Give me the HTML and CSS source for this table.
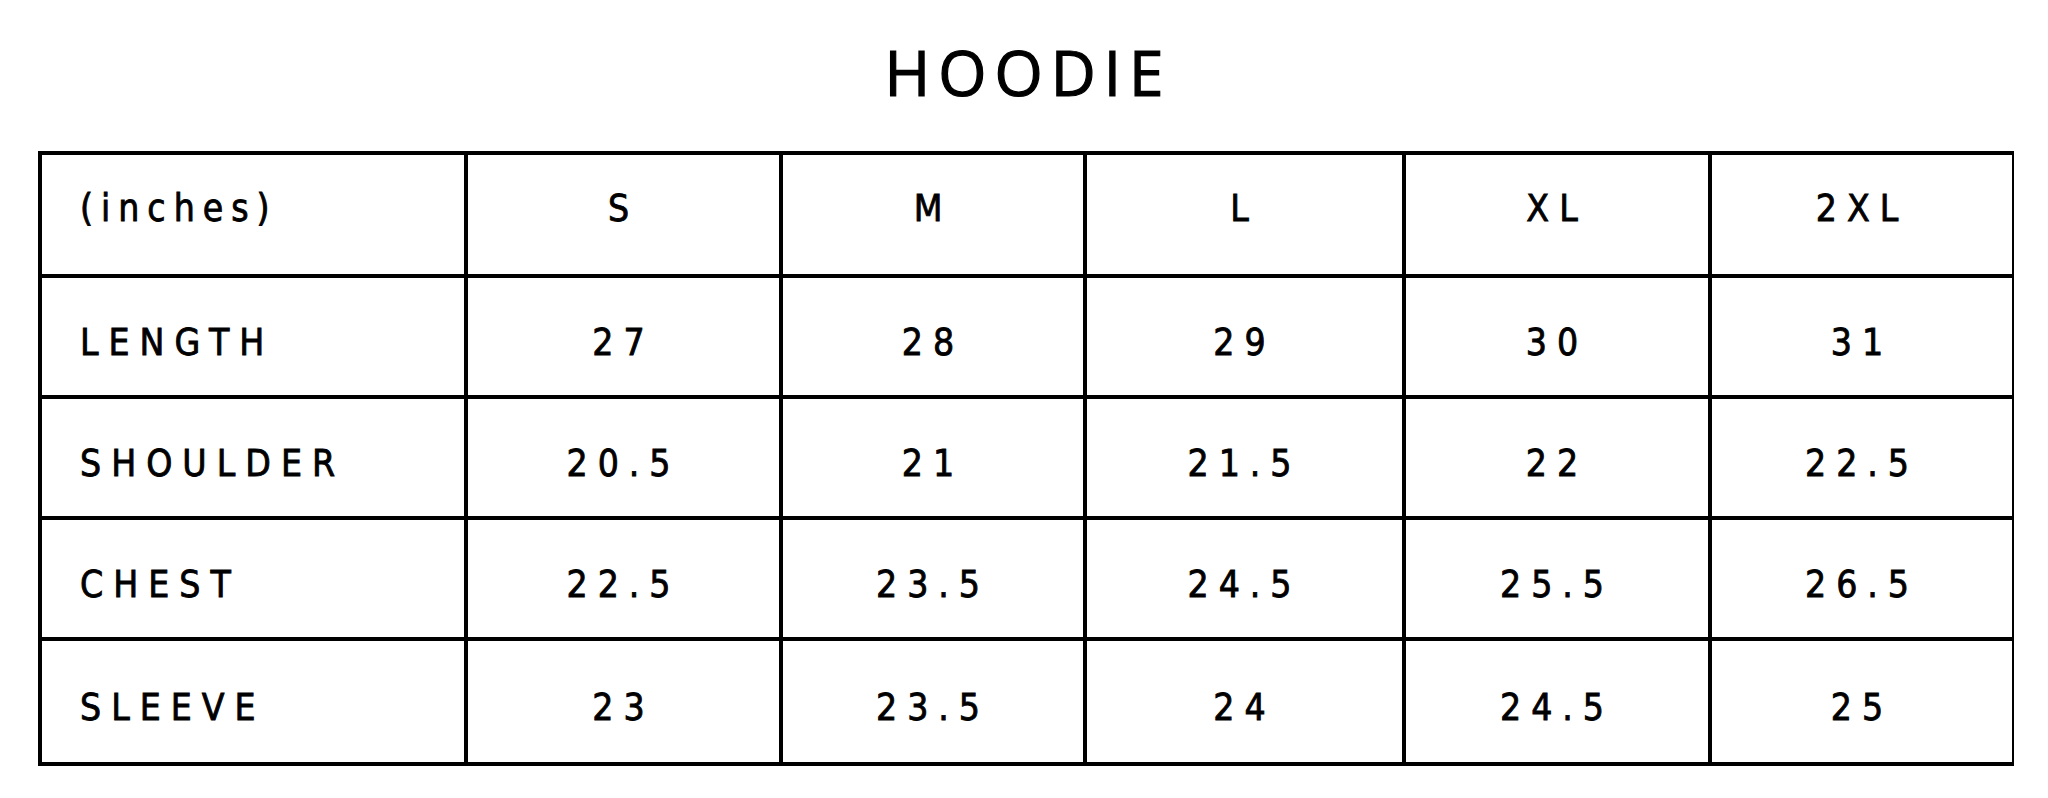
FILE: index.html
```html
<!DOCTYPE html>
<html lang="en">
<head>
<meta charset="utf-8">
<title>Hoodie size chart</title>
<link rel="stylesheet" href="styles.css">
</head>
<body>
<h1 class="title">HOODIE</h1>
<div class="chart">
  <div class="cell head label lower">(inches)</div>
  <div class="cell head">S</div>
  <div class="cell head">M</div>
  <div class="cell head">L</div>
  <div class="cell head">XL</div>
  <div class="cell head">2XL</div>

  <div class="cell label">LENGTH</div>
  <div class="cell">27</div>
  <div class="cell">28</div>
  <div class="cell">29</div>
  <div class="cell">30</div>
  <div class="cell">31</div>

  <div class="cell label">SHOULDER</div>
  <div class="cell">20.5</div>
  <div class="cell">21</div>
  <div class="cell">21.5</div>
  <div class="cell">22</div>
  <div class="cell">22.5</div>

  <div class="cell label">CHEST</div>
  <div class="cell">22.5</div>
  <div class="cell">23.5</div>
  <div class="cell">24.5</div>
  <div class="cell">25.5</div>
  <div class="cell">26.5</div>

  <div class="cell label">SLEEVE</div>
  <div class="cell">23</div>
  <div class="cell">23.5</div>
  <div class="cell">24</div>
  <div class="cell">24.5</div>
  <div class="cell">25</div>
</div>
</body>
</html>
```

FILE: styles.css
```css
html, body {
  margin: 0;
  padding: 0;
  background: #ffffff;
}

body {
  color: #000000;
  font-family: "Liberation Sans Narrow", "DejaVu Sans Condensed", Roboto, sans-serif;
}

.title {
  margin: 41px 0 0 0;
  height: 62px;
  font-family: "Open Sans", "Liberation Sans", sans-serif;
  font-weight: 500;
  font-size: 62px;
  line-height: 62px;
  letter-spacing: 8px;
  text-align: center;
  padding-left: 8px;
  -webkit-text-stroke: 1.2px #000000;
}

.chart {
  margin: 48px 0 0 38px;
  width: 1976px;
  box-sizing: border-box;
  display: grid;
  grid-template-columns: 422px 311px 300px 315px 302px 300px;
  grid-template-rows: 119px 117px 117px 117px 121px;
  gap: 4px;
  padding: 4px;
  background: #000000;
}

.cell {
  background: #ffffff;
  display: flex;
  align-items: center;
  justify-content: center;
  font-size: 37px;
  font-weight: 400;
  letter-spacing: 10px;
  padding-top: 11px;
  box-sizing: border-box;
  white-space: nowrap;
  -webkit-text-stroke: 0.8px #000000;
}

.cell.head {
  padding-top: 0;
  padding-bottom: 12px;
}

.cell.label {
  justify-content: flex-start;
  padding-left: 38px;
}

.cell.lower {
  letter-spacing: 8px;
}
```
